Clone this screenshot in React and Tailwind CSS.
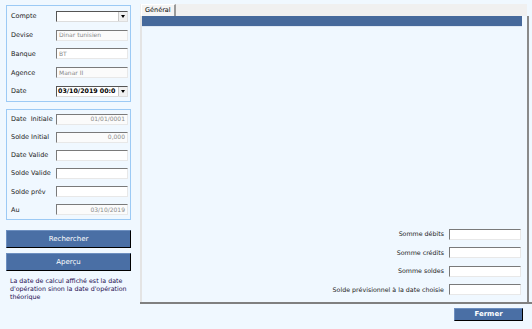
import React from "react";

const font = { fontFamily: '"DejaVu Sans", Verdana, sans-serif' };

function Field({ value = "", align = "left", disabled = false }) {
  return (
    <div
      className={`h-[11px] w-[72px] border border-t-[#7a7a7a] border-l-[#7a7a7a] border-b-[#e8e8e8] border-r-[#e8e8e8] flex items-center px-[2px] text-[6px] text-[#8a8a8a] leading-none ${
        disabled ? "bg-[#fbfbfb]" : "bg-white"
      } ${align === "right" ? "justify-end" : "justify-start"}`}
    >
      {value}
    </div>
  );
}

function Arrow() {
  return (
    <div className="ml-auto h-[9px] w-[9px] shrink-0 bg-[#f0f0f0] border-l border-[#c8c8c8] flex items-center justify-center">
      <div className="w-0 h-0 border-l-[2.5px] border-r-[2.5px] border-t-[3px] border-l-transparent border-r-transparent border-t-black" />
    </div>
  );
}

function Row({ label, children }) {
  return (
    <div className="flex items-center h-[19px]">
      <span className="w-[45px] text-[6.5px] text-[#222] leading-none">{label}</span>
      {children}
    </div>
  );
}

function Row2({ label, children }) {
  return (
    <div className="flex items-center h-[18.5px]">
      <span className="w-[45px] text-[6.5px] text-[#222] leading-none whitespace-pre">{label}</span>
      {children}
    </div>
  );
}

function SumRow({ label }) {
  return (
    <div className="flex items-center justify-end h-[18.5px]">
      <span className="text-[6.3px] text-[#222] leading-none mr-[5px]">{label}</span>
      <div className="h-[11px] w-[72px] bg-white border border-t-[#7a7a7a] border-l-[#7a7a7a] border-b-[#e8e8e8] border-r-[#e8e8e8]" />
    </div>
  );
}

function BlueButton({ children, className = "" }) {
  return (
    <button
      className={`bg-[#4a6fa5] text-white border border-t-[#6d8fc0] border-l-[#6d8fc0] border-b-black border-r-black flex items-center justify-center leading-none ${className}`}
    >
      {children}
    </button>
  );
}

export default function App() {
  return (
    <div className="w-[532px] h-[329px] bg-[#f0f8ff] flex overflow-hidden" style={font}>
      {/* left column */}
      <div className="ml-[6px] mt-[5px] w-[125px] flex flex-col">
        <div className="h-[97px] border border-[#9ccaf5] pl-[4px] pt-[1px] flex flex-col">
          <Row label="Compte">
            <div className="h-[11px] w-[72px] bg-white border border-t-[#555] border-l-[#555] border-b-[#ddd] border-r-[#ddd] flex items-center">
              <Arrow />
            </div>
          </Row>
          <Row label="Devise">
            <Field value="Dinar tunisien" disabled />
          </Row>
          <Row label="Banque">
            <Field value="BT" />
          </Row>
          <Row label="Agence">
            <Field value="Manar II" disabled />
          </Row>
          <Row label="Date">
            <div className="h-[11px] w-[72px] bg-white border border-t-[#555] border-l-[#555] border-b-[#ddd] border-r-[#ddd] flex items-center">
              <span className="text-[6.3px] font-bold text-black leading-none pl-[1px] whitespace-nowrap">
                03/10/2019 00:0
              </span>
              <Arrow />
            </div>
          </Row>
        </div>

        <div className="mt-[7px] h-[111px] border border-[#9ccaf5] pl-[4px] flex flex-col">
          <Row2 label="Date  Initiale">
            <Field value="01/01/0001" align="right" disabled />
          </Row2>
          <Row2 label="Solde Initial">
            <Field value="0,000" align="right" disabled />
          </Row2>
          <Row2 label="Date Valide">
            <Field />
          </Row2>
          <Row2 label="Solde Valide">
            <Field />
          </Row2>
          <Row2 label="Solde prév">
            <Field />
          </Row2>
          <Row2 label="Au">
            <Field value="03/10/2019" align="right" disabled />
          </Row2>
        </div>

        <BlueButton className="mt-[10px] h-[18px] w-[125px] text-[7px]">Rechercher</BlueButton>
        <BlueButton className="mt-[5px] h-[18px] w-[125px] text-[7px]">Aperçu</BlueButton>

        <p className="mt-[6px] pl-[4px] pr-[2px] text-[6.3px] leading-[8px] text-[#1e0c50]">
          La date de calcul affiché est la date d'opération sinon la date d'opération théorique
        </p>
      </div>

      {/* right column */}
      <div className="ml-[9px] mt-[4px] w-[392px] flex flex-col">
        <div className="h-[300px] flex flex-col border-b-2 border-[#808080]">
          <div className="h-[12px] bg-[#f0f0f0] mr-[5px] flex items-end">
            <div className="ml-[1px] h-[12px] px-[3px] bg-[#f4f4f4] border-t border-l border-white border-r-2 border-r-[#9a9a9a] text-[6.5px] text-black leading-none flex items-center">
              Général
            </div>
          </div>
          <div className="flex-1 flex border-l-2 border-[#e4e4e4] border-r-2 border-r-[#8a8a8a] mr-[3px]">
            <div className="flex-1 flex flex-col pr-[5px]">
              <div className="h-[11px] bg-[#46699b] border-b border-[#dfe8f3]" />
              <div className="flex-1 flex flex-col justify-end pb-[3px] pr-[1px]">
                <SumRow label="Somme débits" />
                <SumRow label="Somme crédits" />
                <SumRow label="Somme soldes" />
                <SumRow label="Solde prévisionnel à la date choisie" />
              </div>
            </div>
          </div>
        </div>
        <div className="flex justify-end pr-[9px] mt-[4px]">
          <BlueButton className="h-[13px] w-[69px] text-[7px] font-bold">Fermer</BlueButton>
        </div>
      </div>
    </div>
  );
}
